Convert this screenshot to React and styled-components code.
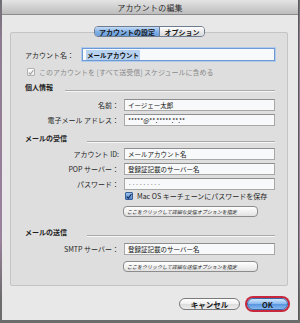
import React from 'react'
import styled, { createGlobalStyle } from 'styled-components'

const Global = createGlobalStyle`
  html, body {
    margin: 0;
    padding: 0;
  }
  body {
    width: 300px;
    height: 323px;
    overflow: hidden;
    background: linear-gradient(to bottom, #6f6f72 0px, #8e7b92 40px, #9a829c 240px, #6c6c6c 300px);
    font-family: "Noto Sans CJK JP", "Noto Sans", sans-serif;
  }
`;

const Window = styled.div`
    box-sizing: border-box;
    width: 297px;
    height: 320px;
    margin-left: 2px;
    background: #e8e8e8;
    border-right: 1px solid #5a5a5a;
    display: flex;
    flex-direction: column;
    color: #1e1e1e;
`;

const TitleBar = styled.div`
    height: 14px;
    flex-shrink: 0;
    display: flex;
    align-items: center;
    justify-content: center;
    background: linear-gradient(to bottom, #e4e4e4, #bdbdbd);
    border-bottom: 1px solid #8c8c8c;
    font-size: 8px;
    color: #2a2a2a;
    letter-spacing: 0.2px;
`;

const Tabs = styled.div`
    position: relative;
    z-index: 1;
    align-self: center;
    margin: 11px 0 -5px 0;
    display: flex;
    height: 11px;
    box-sizing: border-box;
    border: 1px solid #6e7c90;
    border-radius: 4px;
    overflow: hidden;
    margin-left: -1px;
`;

const Tab = styled.div`
    width: ${p => p.$w}px;
    display: flex;
    align-items: center;
    justify-content: center;
    font-size: 7px;
    font-weight: 700;
    color: #1a1a1a;
    background: ${p => p.$active
      ? 'linear-gradient(to bottom, #c4dcf6, #7eaee6 55%, #6a9edc)'
      : 'linear-gradient(to bottom, #ffffff, #e9e9e9 55%, #dadada)'};
    border-right: ${p => p.$active ? '1px solid #6e7c90' : 'none'};
`;

const Group = styled.div`
    box-sizing: border-box;
    margin-left: 8px;
    width: 278px;
    background: #dedede;
    border: 1px solid #c4c4c4;
    border-radius: 2px;
    padding: 15px 12px 13px 14px;
    display: flex;
    flex-direction: column;
`;

const TopRow = styled.div`
    display: flex;
    align-items: center;
    height: 13px;
`;

const TopLabel = styled.div`
    width: 57px;
    font-size: 7px;
`;

const Input = styled.div`
    box-sizing: border-box;
    flex: 1;
    height: ${p => p.$h || 12}px;
    background: #f8f9fa;
    border: 1px solid #a8a8a8;
    border-top-color: #8e8e8e;
    display: flex;
    align-items: center;
    padding-left: 3px;
    font-size: 6.5px;
    color: ${p => p.$muted ? '#777' : '#111'};
    white-space: nowrap;
    overflow: hidden;
    ${p => p.$focus && `
      border: 1px solid #6d9ad2;
      box-shadow: 0 0 0 1px #b1cbec;
    `}
`;

const Selected = styled.span`
    background: #b7d1f1;
    font-weight: 700;
    padding: 0 1px;
`;

const CheckRow = styled.div`
    display: flex;
    align-items: center;
    height: 10px;
    margin-top: ${p => p.$mt}px;
    margin-left: ${p => p.$ml || 0}px;
    font-size: 7px;
    color: ${p => p.$disabled ? '#8a8a8a' : '#1e1e1e'};
    white-space: nowrap;
`;

const Box = styled.div`
    box-sizing: border-box;
    width: 8px;
    height: 8px;
    margin-right: ${p => p.$gap}px;
    border: 1px solid ${p => p.$checked ? '#3a5f96' : '#b0b0b0'};
    border-radius: 1px;
    background: ${p => p.$checked
      ? 'linear-gradient(to bottom, #9cc2f0, #4a86d4)'
      : 'linear-gradient(to bottom, #ffffff, #ececec)'};
    display: flex;
    align-items: center;
    justify-content: center;
    flex-shrink: 0;
`;

const Section = styled.div`
    display: flex;
    align-items: center;
    height: 10px;
    margin-top: ${p => p.$mt}px;
`;

const SectionTitle = styled.div`
    width: ${p => p.$w}px;
    flex-shrink: 0;
    font-size: 7px;
    font-weight: 700;
`;

const Rule = styled.div`
    flex: 1;
    height: 1px;
    margin-top: 8px;
    background: #a9a9a9;
    border-bottom: 1px solid #f6f6f6;
`;

const Form = styled.div`
    display: grid;
    grid-template-columns: 94px 1fr;
    column-gap: 5px;
    row-gap: 3px;
    margin-top: ${p => p.$mt}px;
`;

const Label = styled.div`
    font-size: 7px;
    text-align: right;
    height: 12px;
    line-height: 12px;
    white-space: nowrap;
`;

const Field = styled.div`
    display: flex;
`;

const Extra = styled.div`
    grid-column: 2;
    display: flex;
    flex-direction: column;
`;

const SmallButton = styled.div`
    box-sizing: border-box;
    width: 135px;
    height: 11px;
    margin: ${p => p.$mt}px 0 0 -1px;
    border: 1px solid #8c8c8c;
    border-radius: 4px;
    background: linear-gradient(to bottom, #ffffff, #eeeeee 60%, #e2e2e2);
    display: flex;
    align-items: center;
    padding-left: 3px;
    font-size: 5px;
    font-style: italic;
    color: #222;
    white-space: nowrap;
`;

const Footer = styled.div`
    display: flex;
    justify-content: flex-end;
    align-items: center;
    gap: 7px;
    margin-top: 12px;
    padding-right: 10px;
`;

const PushButton = styled.div`
    box-sizing: border-box;
    width: ${p => p.$w}px;
    height: 12px;
    border-radius: 6px;
    display: flex;
    align-items: center;
    justify-content: center;
    font-size: 7.5px;
    font-weight: 700;
    color: #1a1a1a;
    border: 1px solid ${p => p.$primary ? '#3b68a6' : '#7a7a7a'};
    background: ${p => p.$primary
      ? 'linear-gradient(to bottom, #d2e6fb, #8ebcef 45%, #5b97e0 55%, #86b8ee)'
      : 'linear-gradient(to bottom, #ffffff, #f1f1f1 45%, #dedede 55%, #ececec)'};
    box-shadow: ${p => p.$primary ? '0 0 0 2px #c8283e' : 'none'};
`;

const Check = ({ color }) => (
  <svg width="7" height="7" viewBox="0 0 7 7">
    <path d="M1 3.6 L2.8 5.6 L6.4 0.6" fill="none" stroke={color} strokeWidth="1.2" />
  </svg>
);

const rowsIn = [
  ['アカウント ID:', 'メールアカウント名'],
  ['POP サーバー：', '登録証記載のサーバー名'],
];

export default function App() {
  return (
    <>
      <Global />
      <Window>
        <TitleBar>アカウントの編集</TitleBar>
        <Tabs>
          <Tab $active $w={64}>アカウントの設定</Tab>
          <Tab $w={44}>オプション</Tab>
        </Tabs>
        <Group>
          <TopRow>
            <TopLabel>アカウント名：</TopLabel>
            <Input $h={13} $focus><Selected>メールアカウント</Selected></Input>
          </TopRow>
          <CheckRow $mt={6} $ml={2} $disabled>
            <Box $gap={4}><Check color="#9a9a9a" /></Box>
            このアカウントを [すべて送受信] スケジュールに含める
          </CheckRow>

          <Section $mt={5}>
            <SectionTitle $w={40}>個人情報</SectionTitle>
            <Rule />
          </Section>
          <Form $mt={7}>
            <Label>名前：</Label>
            <Field><Input>イージェー太郎</Input></Field>
            <Label>電子メール アドレス：</Label>
            <Field><Input>*****@**.*****.**.**</Input></Field>
          </Form>

          <Section $mt={7}>
            <SectionTitle $w={62}>メールの受信</SectionTitle>
            <Rule />
          </Section>
          <Form $mt={5}>
            {rowsIn.map(([l, v]) => (
              <React.Fragment key={l}>
                <Label>{l}</Label>
                <Field><Input>{v}</Input></Field>
              </React.Fragment>
            ))}
            <Label>パスワード：</Label>
            <Field><Input $muted>·········</Input></Field>
            <Extra>
              <CheckRow $mt={-2} $ml={1}>
                <Box $checked $gap={4}><Check color="#14203a" /></Box>
                Mac OS キーチェーンにパスワードを保存
              </CheckRow>
              <SmallButton $mt={5}>ここをクリックして詳細な受信オプションを指定</SmallButton>
            </Extra>
          </Form>

          <Section $mt={10}>
            <SectionTitle $w={62}>メールの送信</SectionTitle>
            <Rule />
          </Section>
          <Form $mt={6}>
            <Label>SMTP サーバー：</Label>
            <Field><Input>登録証記載のサーバー名</Input></Field>
            <Extra>
              <SmallButton $mt={3}>ここをクリックして詳細な送信オプションを指定</SmallButton>
            </Extra>
          </Form>
        </Group>
        <Footer>
          <PushButton $w={61}>キャンセル</PushButton>
          <PushButton $w={41} $primary>OK</PushButton>
        </Footer>
      </Window>
    </>
  )
}
